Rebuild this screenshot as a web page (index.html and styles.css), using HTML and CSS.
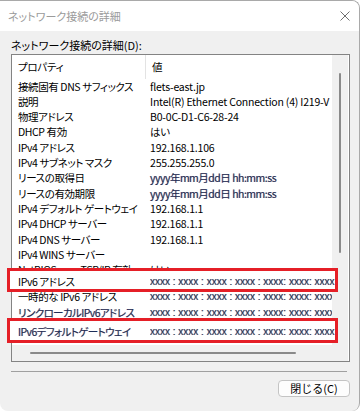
FILE: index.html
```html
<!DOCTYPE html>
<html lang="ja">

<head>
    <meta charset="UTF-8">
    <meta name="viewport" content="width=device-width, initial-scale=1.0">
    <title>ネットワーク接続の詳細</title>
    <link rel="stylesheet" href="styles.css">
</head>

<body>
    <div class="window">
        <!-- タイトルバー -->
        <div class="titlebar">
            <span class="title">ネットワーク接続の詳細</span>
            <svg class="close" width="10" height="10" viewBox="0 0 10 10">
                <path d="M0.5 0.5 L9.5 9.5 M9.5 0.5 L0.5 9.5" stroke="#6f6f6f" stroke-width="1" fill="none" />
            </svg>
        </div>

        <div class="content">
            <div class="caption">ネットワーク接続の詳細(D):</div>

            <!-- 一覧 -->
            <div class="listbox">
                <div class="listcol">
                    <div class="head">
                        <div class="hcell first">プロパティ</div>
                        <div class="hcell">値</div>
                    </div>

                    <div class="row"><span class="prop">接続固有 DNS サフィックス</span><span class="val">flets-east.jp</span></div>
                    <div class="row"><span class="prop">説明</span><span class="val">Intel(R) Ethernet Connection (4) I219-V</span></div>
                    <div class="row"><span class="prop">物理アドレス</span><span class="val">B0-0C-D1-C6-28-24</span></div>
                    <div class="row"><span class="prop">DHCP 有効</span><span class="val">はい</span></div>
                    <div class="row"><span class="prop">IPv4 アドレス</span><span class="val">192.168.1.106</span></div>
                    <div class="row"><span class="prop">IPv4 サブネット マスク</span><span class="val">255.255.255.0</span></div>
                    <div class="row"><span class="prop">リースの取得日</span><span class="val ct">yyyy年mm月dd日 hh:mm:ss</span></div>
                    <div class="row"><span class="prop">リースの有効期限</span><span class="val ct">yyyy年mm月dd日 hh:mm:ss</span></div>
                    <div class="row"><span class="prop">IPv4 デフォルト ゲートウェイ</span><span class="val">192.168.1.1</span></div>
                    <div class="row"><span class="prop">IPv4 DHCP サーバー</span><span class="val">192.168.1.1</span></div>
                    <div class="row"><span class="prop">IPv4 DNS サーバー</span><span class="val">192.168.1.1</span></div>
                    <div class="row"><span class="prop">IPv4 WINS サーバー</span><span class="val"></span></div>
                    <div class="row"><span class="prop">NetBIOS over TCP/IP 有効</span><span class="val">はい</span></div>

                    <div class="row mark first-mark"><span class="prop">IPv6 アドレス</span><span class="val xx">xxxx : xxxx : xxxx : xxxx : xxxx: xxxx: xxxx</span></div>
                    <div class="row tmp"><span class="prop">一時的な IPv6 アドレス</span><span class="val xx">xxxx : xxxx : xxxx : xxxx : xxxx: xxxx: xxxx</span></div>
                    <div class="row link"><span class="prop ct">リンクローカルIPv6アドレス</span><span class="val xx">xxxx : xxxx : xxxx : xxxx : xxxx: xxxx: xxxx</span></div>
                    <div class="row mark second-mark"><span class="prop ct">IPv6デフォルトゲートウェイ</span><span class="val xx">xxxx : xxxx : xxxx : xxxx : xxxx: xxxx: xxxx</span></div>

                    <div class="filler"></div>
                    <div class="hscroll"><div class="hthumb"></div></div>
                </div>
                <div class="vscroll"><div class="vthumb"></div></div>
            </div>

            <div class="sep"></div>
            <div class="buttons">
                <button class="btn">閉じる(C)</button>
            </div>
        </div>
    </div>
</body>

</html>
```

FILE: styles.css
```css
/* ページ全体 */
body {
    margin: 0;
    background-color: #ffffff;
    font-family: "Noto Sans CJK JP", "Liberation Sans", sans-serif;
    font-feature-settings: "palt";
}

.window {
    width: 359px;
    height: 410px;
    background-color: #f0f0f0;
    border-top: 1px solid #a9a9a9;
    border-right: 1px solid #a9a9a9;
    border-radius: 0 8px 8px 8px;
    overflow: hidden;
}

/* タイトルバー */
.titlebar {
    height: 30px;
    background-color: #ffffff;
    display: flex;
    align-items: center;
    justify-content: space-between;
    padding: 0 9px 0 8px;
}

.title {
    font-size: 11px;
    color: #9b9b9b;
}

.close {
    display: block;
}

.content {
    padding: 7px 9px 0 11px;
}

.caption {
    font-size: 11px;
    line-height: 14px;
    color: #000;
}

/* 一覧ボックス */
.listbox {
    margin-top: 2px;
    height: 306px;
    border: 1px solid #838383;
    background-color: #ffffff;
    display: flex;
}

.listcol {
    width: 320px;
    display: flex;
    flex-direction: column;
}

.head {
    height: 23.5px;
    display: flex;
    font-size: 10.5px;
    letter-spacing: -0.3px;
    color: #000;
}

.hcell {
    line-height: 23.5px;
    padding-left: 6px;
}

.hcell.first {
    width: 127px;
    border-right: 1px solid #e3e3e3;
}

.row {
    display: flex;
    height: 15.33px;
    line-height: 15.33px;
    font-size: 10.5px;
    letter-spacing: -0.4px;
    color: #000;
    white-space: nowrap;
}

.prop {
    width: 128px;
    flex: none;
    padding-left: 6px;
    overflow: hidden;
}

.val {
    flex: 1;
    padding-left: 4px;
    overflow: hidden;
    letter-spacing: -0.2px;
}

/* ClearType 風の貼り付け文字 */
.ct {
    color: #1d2d58;
    font-size: 10.5px;
    letter-spacing: -0.5px;
    font-feature-settings: normal;
    text-shadow: 0.5px 0 rgba(230, 140, 40, 0.45), -0.5px 0 rgba(40, 110, 230, 0.45);
}

.prop.ct {
    font-feature-settings: "palt";
    letter-spacing: -0.6px;
}

.xx {
    font-family: "Liberation Sans", sans-serif;
    font-size: 10px;
    letter-spacing: 0;
    color: #27365e;
    text-shadow: 0.5px 0 rgba(230, 140, 40, 0.5), -0.5px 0 rgba(40, 110, 230, 0.5);
}

/* 赤枠 */
.mark {
    position: relative;
    margin-left: -5px;
    margin-right: -6px;
    border: 3px solid #e51f27;
    background-color: #ffffff;
    height: auto;
}

.mark .prop {
    width: 132px;
    padding-left: 8px;
}

.mark .val {
    padding-left: 0;
}

.first-mark {
    margin-top: -9.8px;
    padding-top: 3px;
    line-height: 15px;
    height: 15px;
}

.tmp {
    margin-top: -3px;
    height: 16px;
    line-height: 16px;
}

.link {
    height: 16px;
    line-height: 16px;
}

.second-mark {
    margin-top: -3px;
    padding-top: 3px;
    height: 16px;
    line-height: 16px;
}

.filler {
    flex: 1;
}

/* スクロールバー */
.hscroll {
    height: 16px;
    background-color: #f0f0f0;
    padding-top: 7px;
    box-sizing: border-box;
}

.hthumb {
    margin-left: 18px;
    width: 266px;
    height: 2px;
    border-radius: 1px;
    background-color: #8a8a8a;
}

.vscroll {
    width: 16px;
    background-color: #f0f0f0;
}

.vthumb {
    margin: 18px 0 0 7px;
    width: 2px;
    height: 180px;
    border-radius: 1px;
    background-color: #8a8a8a;
}

.sep {
    margin-top: 9px;
    margin-right: 3px;
    height: 1px;
    background-color: #a0a0a0;
}

.buttons {
    display: flex;
    justify-content: flex-end;
    margin-top: 8px;
}

.btn {
    width: 72px;
    height: 17px;
    padding: 0;
    font-family: "Noto Sans CJK JP", sans-serif;
    font-size: 11px;
    line-height: 15px;
    color: #000;
    background-color: #fdfdfd;
    border: 1px solid #c4c4c4;
    border-radius: 4px;
}
```
